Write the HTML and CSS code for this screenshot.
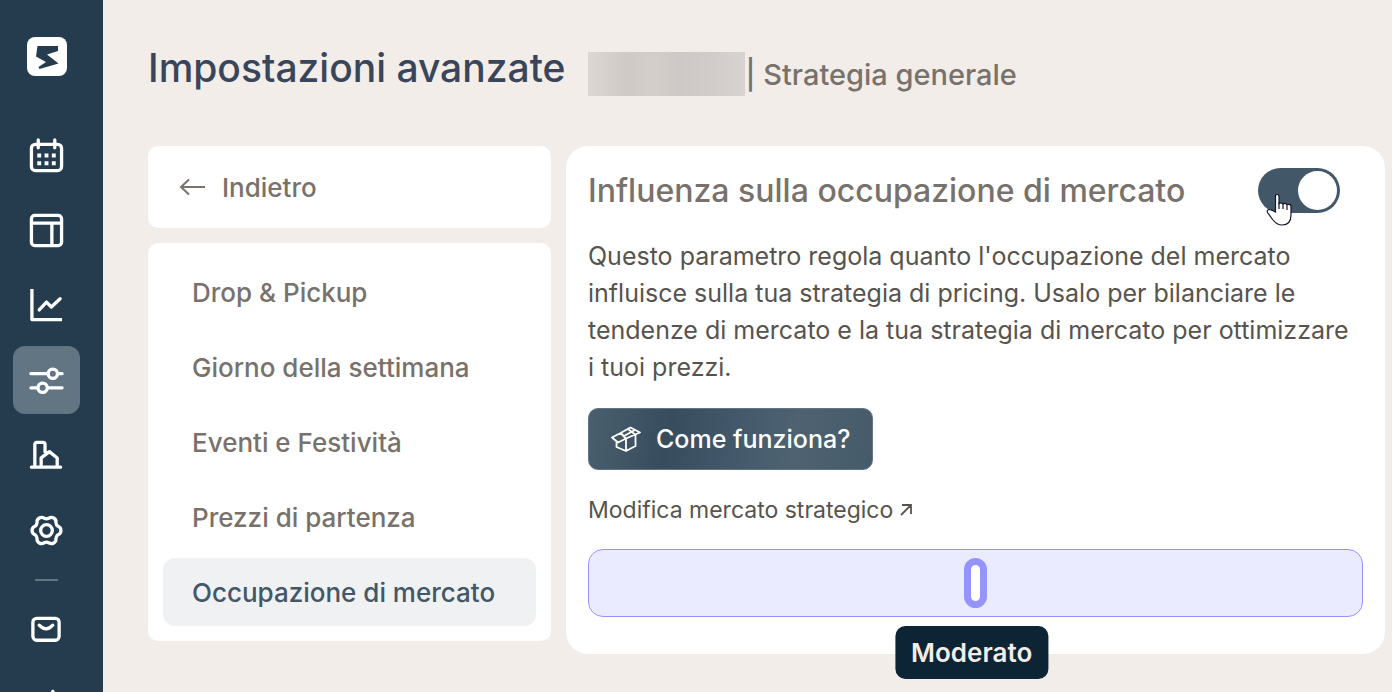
FILE: index.html
```html
<!DOCTYPE html>
<html lang="it">
<head>
<meta charset="utf-8">
<meta name="viewport" content="width=device-width, initial-scale=1">
<title>Impostazioni avanzate</title>
<link rel="stylesheet" href="styles.css">
</head>
<body>
<div class="app">
  <nav class="sidebar" aria-label="Navigazione principale">
    <a class="logo" href="#" aria-label="Home">
      <svg width="40" height="39" viewBox="0 0 40 39"><rect width="40" height="39" rx="8" fill="#fff"/><path d="M10.500 9H31V14L20 17.500L31.500 26.500L12.500 32L11.500 30L19 25L9 19.500Z" fill="#253b4e"/></svg>
    </a>
    <a class="nav-item" href="#" aria-label="Calendario">
      <svg class="icon" viewBox="0 0 36 36"><rect x="2.500" y="6.500" width="31" height="27" rx="4"/><path d="M9.500 2v8M26.500 2v8"/><g class="solid"><path d="M8.500 16h4v4h-4zM16 16h4v4h-4zM23.500 16h4v4h-4zM8.500 24h4v4h-4zM16 24h4v4h-4zM23.500 24h4v4h-4z"/></g></svg>
    </a>
    <a class="nav-item" href="#" aria-label="Bacheca">
      <svg class="icon" viewBox="0 0 36 36"><rect x="2.500" y="2.500" width="31" height="31" rx="3.500"/><path d="M3 10.500h30M23.500 11v22"/></svg>
    </a>
    <a class="nav-item" href="#" aria-label="Statistiche">
      <svg class="icon" viewBox="0 0 36 36"><path d="M3 1v31.500H34" stroke-linecap="butt"/><path d="M10.500 22.500l7.500-8 5 5 9-8.500"/></svg>
    </a>
    <a class="nav-item active" href="#" aria-label="Impostazioni avanzate" aria-current="page">
      <svg class="icon" viewBox="0 0 36 36"><path d="M2 11h17M30 11h4M2 25.500h7M20 25.500h14"/><circle cx="24.500" cy="11" r="4.800"/><circle cx="14" cy="25.500" r="4.800"/></svg>
    </a>
    <a class="nav-item" href="#" aria-label="Strutture">
      <svg class="icon" viewBox="0 0 36 36"><path d="M2.500 30h30M6 30V6.500q0-2 2-2H14.500q2 0 2 2v8M12.500 30V20.500l8.500-6.500 8 6.500V30"/></svg>
    </a>
    <a class="nav-item" href="#" aria-label="Preferenze">
      <svg class="icon" viewBox="-18 -18 36 36"><circle r="6"/><path d="M11.930 -4.340A4.700 4.700 0 0 1 11.930 4.340Q9.870 5.700 9.730 8.160A4.700 4.700 0 0 1 2.210 12.510Q0 11.400 -2.210 12.510A4.700 4.700 0 0 1 -9.730 8.160Q-9.870 5.700 -11.930 4.340A4.700 4.700 0 0 1 -11.930 -4.340Q-9.870 -5.700 -9.730 -8.160A4.700 4.700 0 0 1 -2.210 -12.510Q0 -11.400 2.210 -12.510A4.700 4.700 0 0 1 9.730 -8.160Q9.870 -5.700 11.930 -4.340Z"/></svg>
    </a>
    <hr class="divider">
    <a class="nav-item" href="#" aria-label="Messaggi">
      <svg class="icon" viewBox="0 0 36 36"><rect x="4" y="5.500" width="27" height="22.500" rx="4"/><path d="M10.500 12.500Q17.500 20 24.500 12.500"/></svg>
    </a>
    <a class="nav-item" href="#" aria-label="Novità">
      <svg class="icon" viewBox="0 0 36 36"><path d="M24.500 3.500l5 15-22 7 16-17z"/></svg>
    </a>
  </nav>

  <main class="page">
    <header class="page-header">
      <h1 class="title">Impostazioni avanzate</h1>
      <div class="context"><span class="redacted"></span><span>| Strategia generale</span></div>
    </header>

    <div class="columns">
      <aside class="menu">
        <a class="back" href="#">
          <svg class="back-icon" width="28" height="20" viewBox="0 0 28 20"><path d="M27 10H3M11 2.500L3 10l8 7.500"/></svg>
          Indietro
        </a>
        <nav class="menu-list" aria-label="Parametri">
          <a class="menu-item" href="#">Drop &amp; Pickup</a>
          <a class="menu-item" href="#">Giorno della settimana</a>
          <a class="menu-item" href="#">Eventi e Festività</a>
          <a class="menu-item" href="#">Prezzi di partenza</a>
          <a class="menu-item selected" href="#" aria-current="page">Occupazione di mercato</a>
        </nav>
      </aside>

      <section class="panel">
        <div class="panel-head">
          <label class="panel-title" for="market-toggle">Influenza sulla occupazione di mercato</label>
          <span class="switch">
            <input class="toggle" id="market-toggle" type="checkbox" role="switch" checked>
            <svg class="pointer" width="26" height="34" viewBox="0 0 26 34"><path d="M9.500 19V3.500Q9.500 1.500 11.200 1.500Q13 1.500 13 3.500V10.500Q15 9 17 11Q19 9.500 21 11.500Q25 10.500 25 14V22Q25 32 16 32Q11 32 7 27L1.500 19.500Q0.500 17 3 16.500Q5 16.500 9.500 19Z" fill="#fff" stroke="#14142b" stroke-width="1.200"/><path d="M13 10v6M17 11v5M21 12v5" fill="none" stroke="#14142b" stroke-width="1.200"/></svg>
          </span>
        </div>
        <p class="description">Questo parametro regola quanto l'occupazione del mercato influisce sulla tua strategia di pricing. Usalo per bilanciare le tendenze di mercato e la tua strategia di mercato per ottimizzare i&nbsp;tuoi prezzi.</p>
        <button class="how" type="button">
          <svg class="how-icon" width="30" height="26" viewBox="0 0 30 26"><path d="M1 11.500L9.500 7 15 12.500 7 16.500ZM9.500 7L19.500 1.500 29 6.500 15 12.500M17 3l7 5.500M9.500 7l3.500 3 10-5.500M5.500 16v5l9.500 4 9.500-5V9M15 13v12"/></svg>
          Come funziona?
        </button>
        <a class="edit-link" href="#">Modifica mercato strategico
          <svg class="edit-icon" width="12" height="12" viewBox="0 0 12 12"><path d="M1 11L11 1M2 1h9v9"/></svg>
        </a>
        <div class="slider">
          <input class="range" id="influence" type="range" min="0" max="100" value="50" aria-label="Influenza">
          <output class="tooltip" for="influence">Moderato</output>
        </div>
      </section>
    </div>
  </main>
</div>
</body>
</html>
```
FILE: styles.css
```css
* {
  box-sizing: border-box;
}

body {
  margin: 0;
  background: #f2ede9;
  color: #57534e;
  font-family: Inter, "Liberation Sans", sans-serif;
}

a {
  color: inherit;
  text-decoration: none;
}

svg {
  flex: none;
}

.app {
  display: flex;
  height: 100vh;
  overflow: hidden;
}

.sidebar {
  flex: none;
  display: flex;
  flex-direction: column;
  align-items: center;
  gap: 7px;
  width: 103px;
  padding: 37px 10px 0 0;
  background: #253b4e;
}

.logo {
  display: flex;
  margin-bottom: 38px;
}

.nav-item {
  flex: none;
  display: flex;
  align-items: center;
  justify-content: center;
  width: 67px;
  height: 68px;
  border-radius: 12px;
}

.nav-item.active {
  background: #627583;
}

.icon {
  width: 35px;
  height: 35px;
  fill: none;
  stroke: #fff;
  stroke-width: 3.4;
  stroke-linecap: round;
  stroke-linejoin: round;
}

.solid {
  fill: #fff;
  stroke: none;
}

.divider {
  flex: none;
  width: 23px;
  height: 2px;
  margin: 8px 0;
  border: 0;
  background: #627583;
}

.page {
  flex: 1;
  min-width: 0;
  padding: 44px 7px 0 45px;
}

.page-header {
  display: flex;
  align-items: flex-start;
  gap: 23px;
  height: 60px;
  margin-bottom: 42px;
}

.title {
  margin: 0;
  color: #39455a;
  font-size: 39px;
  font-weight: 500;
  line-height: 48px;
  white-space: nowrap;
}

.context {
  display: flex;
  align-items: center;
  height: 60px;
  color: #78716c;
  font-size: 29px;
  font-weight: 500;
  white-space: nowrap;
}

.redacted {
  width: 157px;
  height: 44px;
  background: linear-gradient(90deg, #dcd7d3, #cfcac6 25%, #d3ceca 42%, #cdc8c5 58%, #d1ccc9 78%, #d8d3d0);
}

.columns {
  display: grid;
  grid-template-columns: 403px 1fr;
  align-items: start;
  gap: 15px;
}

.menu {
  display: grid;
  gap: 15px;
  color: #78716c;
  font-size: 26px;
  font-weight: 500;
}

.back {
  display: flex;
  align-items: center;
  gap: 16px;
  height: 82px;
  padding: 0 30px;
  border-radius: 10px;
  background: #fff;
}

.back-icon {
  fill: none;
  stroke: #78716c;
  stroke-width: 2;
}

.menu-list {
  display: grid;
  gap: 7px;
  padding: 15px;
  border-radius: 10px;
  background: #fff;
}

.menu-item {
  display: flex;
  align-items: center;
  height: 68px;
  padding: 0 29px;
  border-radius: 12px;
  white-space: nowrap;
}

.menu-item.selected {
  background: #f0f1f3;
  color: #425767;
}

.panel {
  display: flex;
  flex-direction: column;
  align-items: flex-start;
  padding: 22px 22px 37px;
  border-radius: 22px;
  background: #fff;
}

.panel-head {
  display: flex;
  align-items: center;
  justify-content: space-between;
  align-self: stretch;
  padding-right: 23px;
}

.panel-title {
  color: #78716c;
  font-size: 32px;
  font-weight: 500;
  line-height: 45px;
  white-space: nowrap;
}

.switch {
  position: relative;
  display: flex;
}

.toggle {
  appearance: none;
  display: flex;
  align-items: center;
  justify-content: flex-end;
  width: 82px;
  height: 45px;
  margin: 0;
  padding: 3px;
  border-radius: 23px;
  background: #425767;
}

.toggle::before {
  content: "";
  width: 39px;
  height: 39px;
  border-radius: 50%;
  background: #fff;
}

.pointer {
  position: absolute;
  top: 25px;
  left: 8px;
}

.description {
  margin: 25px 0 22px;
  font-size: 25px;
  line-height: 37px;
}

.how {
  display: flex;
  align-items: center;
  gap: 15px;
  height: 62px;
  padding: 0 22px;
  border: 1px solid #627583;
  border-radius: 10px;
  background: linear-gradient(100deg, #4a5f6e, #374d5d 28%, #42586a 50%, #4e6271 72%, #465b6a);
  color: #fff;
  font: inherit;
  font-size: 25px;
  font-weight: 500;
  white-space: nowrap;
}

.how-icon {
  fill: none;
  stroke: #fff;
  stroke-width: 1.8;
  stroke-linejoin: round;
}

.edit-link {
  display: flex;
  align-items: center;
  gap: 7px;
  margin: 25px 0 24px;
  font-size: 23px;
  line-height: 30px;
}

.edit-icon {
  fill: none;
  stroke: #57534e;
  stroke-width: 1.8;
}

.slider {
  position: relative;
  align-self: stretch;
  display: flex;
}

.range {
  appearance: none;
  width: 100%;
  height: 68px;
  margin: 0;
  border: 1px solid #9594ff;
  border-radius: 15px;
  background: #ebebff;
}

.range::-webkit-slider-thumb {
  appearance: none;
  width: 23px;
  height: 50px;
  border: 7px solid #9594ff;
  border-radius: 12px;
  background: #fff;
}

.tooltip {
  position: absolute;
  top: 77px;
  left: 49.5%;
  padding: 0 16px;
  border-radius: 10px;
  background: #0d2435;
  color: #f2ede9;
  font-size: 26px;
  font-weight: 600;
  line-height: 53px;
  transform: translateX(-50%);
}
```
